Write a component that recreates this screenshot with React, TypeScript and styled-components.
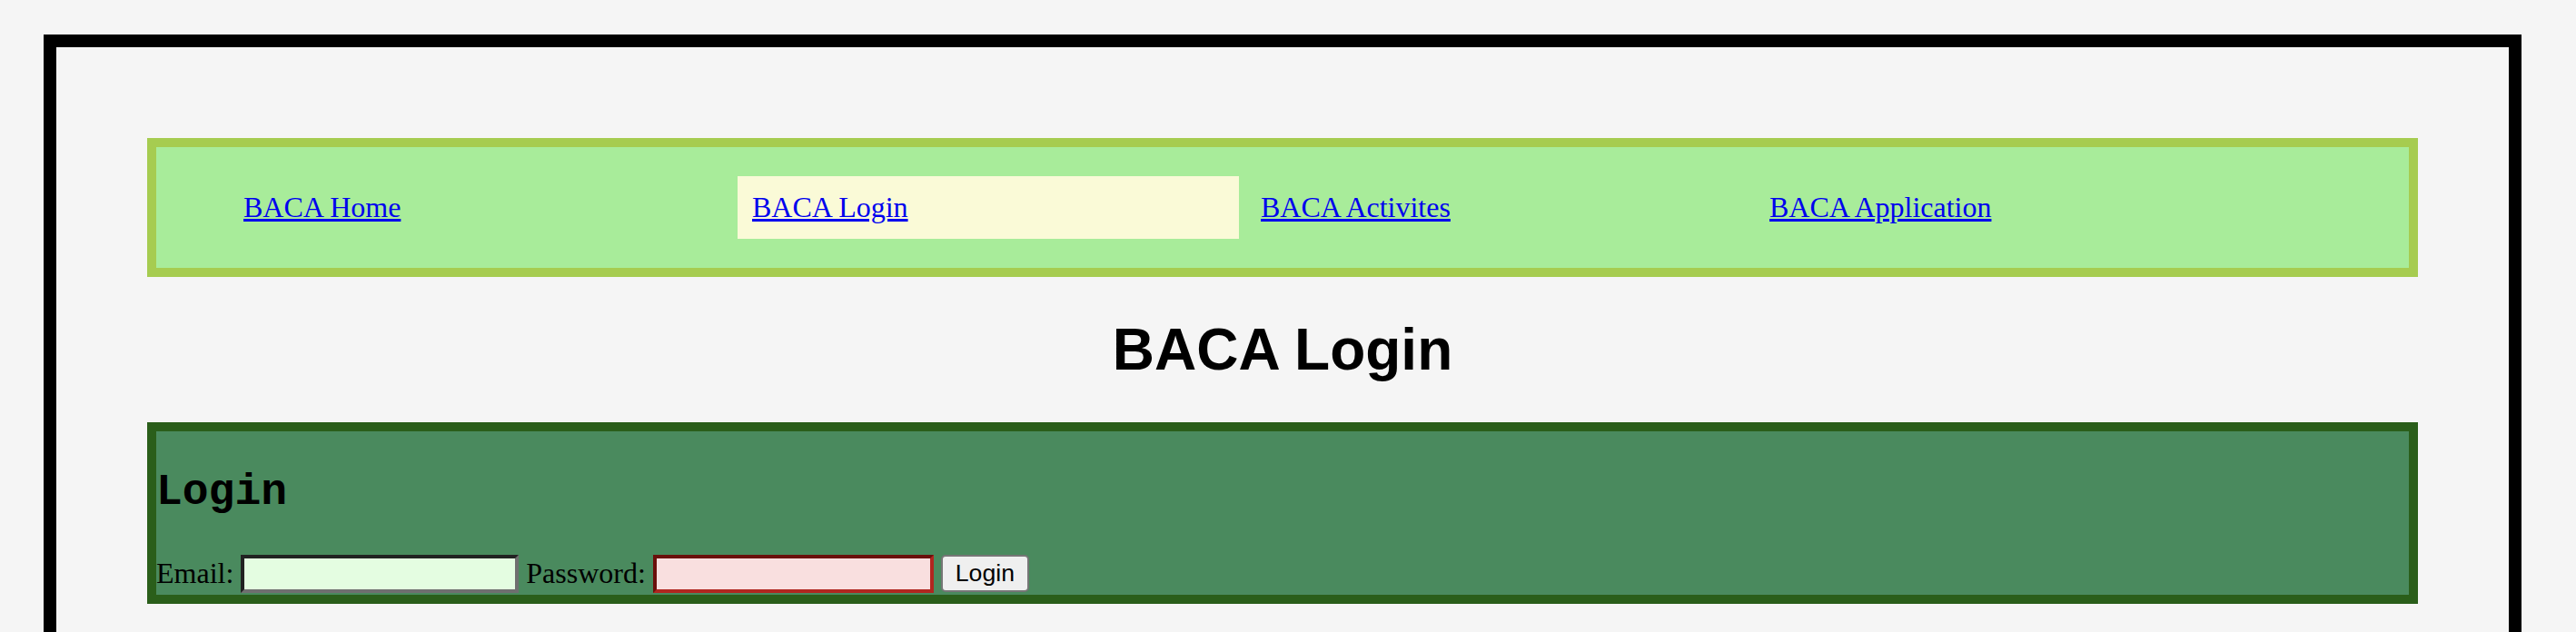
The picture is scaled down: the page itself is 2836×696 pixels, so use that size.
import styled, { createGlobalStyle } from 'styled-components';

const GlobalStyle = createGlobalStyle`
  html, body {
    margin: 0;
    padding: 0;
    background: #f5f5f5;
  }
  body {
    font-family: "Liberation Serif", "Times New Roman", serif;
    font-size: 32px;
  }
`;

const Page = styled.div`
  box-sizing: border-box;
  width: 2728px;
  margin: 38px 0 0 48px;
  padding: 100px 100px 60px;
  border: 14px solid #000;
  background: #f5f5f5;
`;

const Nav = styled.nav`
  border: 10px solid #a6cc50;
  background: #a8ec9a;
`;

const NavList = styled.ul`
  display: flex;
  gap: 8px;
  margin: 32px 0;
  padding: 0 0 0 80px;
  list-style: none;
`;

const NavItem = styled.li<{ $active?: boolean }>`
  width: 520px;
  padding: 16px;
  line-height: 36.8px;
  background: ${(p) => (p.$active ? '#fafad7' : 'transparent')};

  a {
    color: #0000ee;
    text-decoration: underline;
  }
`;

const Title = styled.h1`
  margin: 43px 0;
  font-family: "Liberation Sans", Arial, sans-serif;
  font-size: 64px;
  font-weight: bold;
  text-align: center;
`;

const LoginPanel = styled.section`
  border: 10px solid #2a5e1a;
  background: #4a8a5e;
`;

const PanelTitle = styled.h2`
  margin: 40px 0;
  font-family: "Liberation Mono", "Courier New", monospace;
  font-size: 48px;
  font-weight: bold;
`;

const Form = styled.form`
  display: flex;
  align-items: center;
  height: 46px;
  font-size: 32px;
`;

const Label = styled.label`
  margin-right: 8px;
`;

const Input = styled.input<{ $tone: 'email' | 'password' }>`
  box-sizing: border-box;
  width: ${(p) => (p.$tone === 'email' ? '306px' : '309px')};
  height: 42px;
  margin-right: 8px;
  padding: 2px 4px;
  border: 4px solid;
  border-color: ${(p) =>
    p.$tone === 'email'
      ? '#222 #6f6f6f #6f6f6f #222'
      : '#6a100b #b0261f #b0261f #6a100b'};
  border-radius: 0;
  background: ${(p) => (p.$tone === 'email' ? '#e4fde1' : '#f9dfdf')};
  font-size: 26px;
  outline: none;
`;

const Button = styled.button`
  box-sizing: border-box;
  width: 97px;
  height: 41px;
  padding: 2px 12px;
  border: 2px solid #767676;
  border-radius: 5px;
  background: #efefef;
  color: #000;
  font-family: "Liberation Sans", Arial, sans-serif;
  font-size: 26.67px;
`;

const links = [
  { label: 'BACA Home' },
  { label: 'BACA Login', active: true },
  { label: 'BACA Activites' },
  { label: 'BACA Application' },
];

export default function App() {
  return (
    <>
      <GlobalStyle />
      <Page>
        <Nav>
          <NavList>
            {links.map((l) => (
              <NavItem key={l.label} $active={l.active}>
                <a href="#">{l.label}</a>
              </NavItem>
            ))}
          </NavList>
        </Nav>
        <Title>BACA Login</Title>
        <LoginPanel>
          <PanelTitle>Login</PanelTitle>
          <Form onSubmit={(e) => e.preventDefault()}>
            <Label htmlFor="email">Email:</Label>
            <Input $tone="email" id="email" type="email" />
            <Label htmlFor="password">Password:</Label>
            <Input $tone="password" id="password" type="password" />
            <Button type="submit">Login</Button>
          </Form>
        </LoginPanel>
      </Page>
    </>
  );
}
